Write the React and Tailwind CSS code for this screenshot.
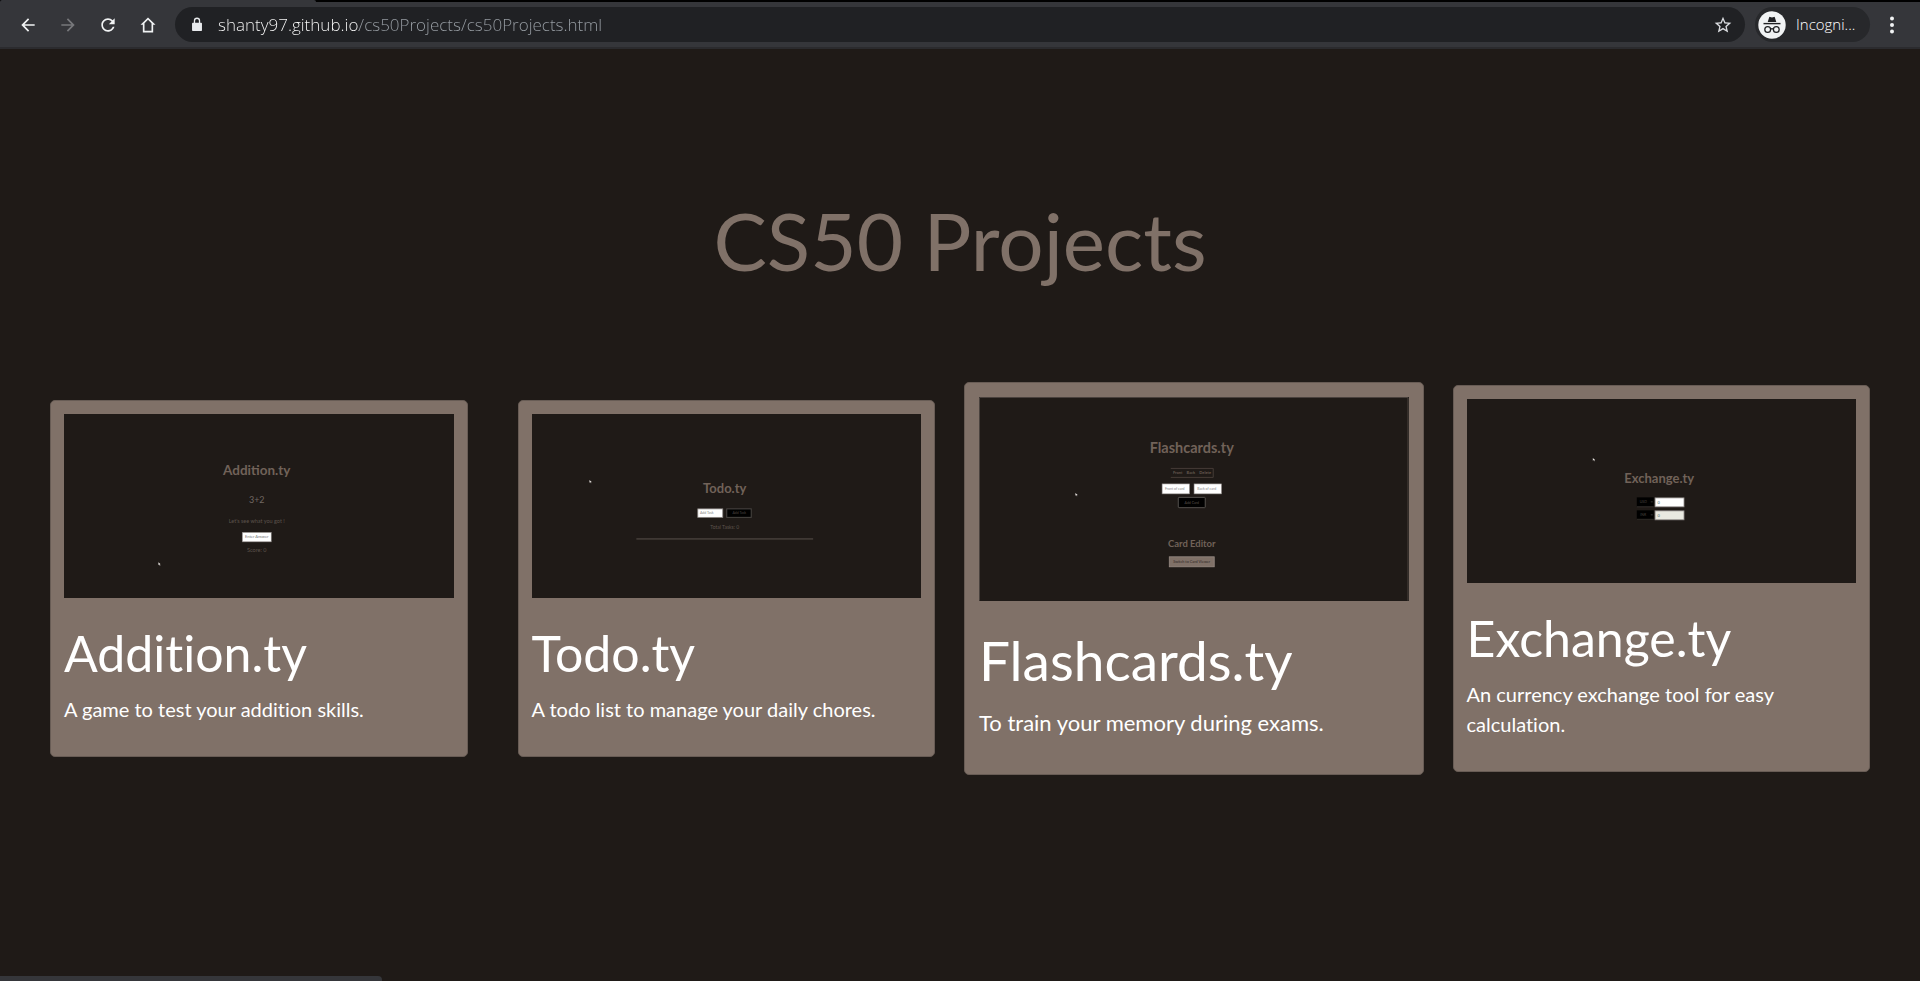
import React from "react";

const small = "#5d534c";

function Pointer({ x, y }) {
  return <path d={`M${x} ${y}v2.8l.8-.6.7 1.2.5-.3-.6-1.1h.9z`} fill="#e6e2df" />;
}

function AdditionShot() {
  return (
    <svg viewBox="0 0 390 185" className="block w-full bg-[#1f1a17]" role="img" aria-label="Addition.ty preview" fontFamily="Lato, sans-serif" textAnchor="middle">
      <text x="193" y="61" fontSize="13.500" fontWeight="700" fill="#716259">Addition.ty</text>
      <text x="193" y="89" fontSize="9" fill="#716762">3+2</text>
      <text x="193" y="109" fontSize="5.500" fill={small}>Let's see what you got !</text>
      <rect x="178.5" y="118.5" width="29" height="9.5" fill="#fff" stroke="#8a8583" strokeWidth=".6" />
      <text x="193" y="124.6" fontSize="4" fill="#777">Enter Answer</text>
      <text x="193" y="138" fontSize="5.500" fill={small}>Score: 0</text>
      <Pointer x={94.5} y={148.5} />
    </svg>
  );
}

function TodoShot() {
  return (
    <svg viewBox="0 0 390 185" className="block w-full bg-[#1f1a17]" role="img" aria-label="Todo.ty preview" fontFamily="Lato, sans-serif" textAnchor="middle">
      <text x="193" y="79" fontSize="13" fontWeight="700" fill="#716259">Todo.ty</text>
      <rect x="166" y="95" width="25" height="8.5" fill="#fff" stroke="#8a8583" strokeWidth=".8" />
      <text x="175" y="100.5" fontSize="3.5" fill="#888">Add Task</text>
      <rect x="195" y="95" width="24.5" height="8.5" fill="#000" stroke="#4b4744" />
      <text x="207.500" y="100.5" fontSize="3.5" fill="#4d4642">Add Task</text>
      <text x="193" y="115.500" fontSize="5" fill={small}>Total Tasks: 0</text>
      <rect x="104.500" y="124.5" width="177" height="1.2" fill="#504843" />
      <Pointer x={57.5} y={66} />
    </svg>
  );
}

function FlashcardsShot() {
  return (
    <svg viewBox="0 0 430 204" className="block w-full bg-[#1f1a17]" role="img" aria-label="Flashcards.ty preview" fontFamily="Lato, sans-serif" textAnchor="middle">
      <path d="M.5 204V.5h429V204" fill="none" stroke="#4a423e" />
      <text x="213" y="56" fontSize="14.500" fontWeight="700" fill="#716259">Flashcards.ty</text>
      <path d="M192 71.5h42.5v9H192" fill="none" stroke="#4a403a" strokeWidth=".9" />
      <g fontSize="4" fontWeight="700" fill="#665950">
        <text x="199" y="77.5">Front</text>
        <text x="212" y="77.5">Back</text>
        <text x="226.500" y="77.5">Delete</text>
      </g>
      <rect x="183.300" y="87" width="27.500" height="10" fill="#fff" stroke="#8a8583" strokeWidth=".6" />
      <rect x="215.300" y="87" width="27.500" height="10" fill="#fff" stroke="#8a8583" strokeWidth=".6" />
      <text x="196" y="93.500" fontSize="3.500" fill="#888">Front of card</text>
      <text x="228" y="93.500" fontSize="3.500" fill="#888">Back of card</text>
      <rect x="199.500" y="100.500" width="27" height="10.300" rx=".6" fill="#000" stroke="#54504d" />
      <text x="213" y="107" fontSize="3.500" fill="#5a514c">Add Card</text>
      <text x="213" y="150.500" fontSize="9.500" fontWeight="700" fill="#716259">Card Editor</text>
      <rect x="190.500" y="160" width="45" height="10" fill="#807168" stroke="#978b84" strokeWidth=".8" />
      <text x="213" y="166.500" fontSize="3.800" fill="#2f2825">Switch to Card Viewer</text>
      <Pointer x={96.5} y={96} />
    </svg>
  );
}

function ExchangeShot() {
  return (
    <svg viewBox="0 0 390 185" className="block w-full bg-[#1f1a17]" role="img" aria-label="Exchange.ty preview" fontFamily="Lato, sans-serif" textAnchor="middle">
      <text x="192.500" y="84" fontSize="13" fontWeight="700" fill="#716259">Exchange.ty</text>
      <rect x="170" y="98.500" width="17" height="9.500" fill="#000" />
      <rect x="170" y="107.500" width="17" height=".9" fill="#37322f" />
      <text x="176.500" y="104.500" fontSize="3.500" fill="#49423e">USD</text>
      <path d="M184 103h2" stroke="#555" strokeWidth=".6" />
      <rect x="188.300" y="99" width="29" height="9" fill="#fff" stroke="#8a8583" strokeWidth=".8" />
      <text x="191.800" y="105" fontSize="4" fill="#3f6a70">0</text>
      <rect x="170" y="111.500" width="17" height="9.500" fill="#000" />
      <rect x="170" y="120" width="17" height=".9" fill="#37322f" />
      <text x="176.500" y="117.500" fontSize="3.500" fill="#49423e">INR</text>
      <path d="M184 116h2" stroke="#555" strokeWidth=".6" />
      <rect x="188.300" y="112" width="29" height="9" fill="#e9e9e1" stroke="#8a8583" strokeWidth=".8" />
      <text x="191.800" y="118" fontSize="4" fill="#4e6b6f">0</text>
      <Pointer x={126} y={59} />
    </svg>
  );
}

const projects = [
  { name: "Addition.ty", text: "A game to test your addition skills.", Shot: AdditionShot },
  { name: "Todo.ty", text: "A todo list to manage your daily chores.", Shot: TodoShot },
  { name: "Flashcards.ty", text: "To train your memory during exams.", Shot: FlashcardsShot, raised: true },
  { name: "Exchange.ty", text: "An currency exchange tool for easy calculation.", Shot: ExchangeShot },
];

function Card({ name, text, Shot, raised }) {
  return (
    <a
      href={`#${name}`}
      className={
        "block rounded-[5px] border border-[#685c55] bg-[#807168] text-white " +
        (raised ? "-mx-[21px] px-3.5 pt-3.5 pb-[35px]" : "px-[13px] pt-[13px] pb-8")
      }
    >
      <Shot />
      <div className="[font-variant-ligatures:none]">
        <h2 className={raised ? "mt-[26px] text-[55px] leading-[66px]" : "mt-[25px] text-[50px] leading-[60px]"}>{name}</h2>
        <p className={raised ? "mt-[13px] text-[22px] leading-[33px]" : "mt-[11px] text-[20px] leading-[30px]"}>{text}</p>
      </div>
    </a>
  );
}

function Glyph({ d, className }) {
  return (
    <svg viewBox="0 0 24 24" className={"size-5 " + className} fill="currentColor" aria-hidden="true">
      <path d={d} />
    </svg>
  );
}

function BrowserBar() {
  const nav = "flex size-10 items-center justify-center";
  return (
    <header className="bg-[#35363a] font-['Open_Sans',sans-serif]">
      <div className="flex h-0.5 bg-black">
        <div className="w-[316px] rounded-t-sm bg-[#35363a]" />
      </div>
      <div className="flex h-[47px] items-center border-b-2 border-[#2b2b2e] pl-2">
        <button type="button" aria-label="Back" className={nav}>
          <Glyph className="text-[#f1f3f4]" d="M20 11H7.830l5.590-5.590L12 4l-8 8 8 8 1.410-1.410L7.830 13H20v-2z" />
        </button>
        <button type="button" aria-label="Forward" className={nav}>
          <Glyph className="text-[#77787b]" d="M12 4l-1.410 1.410L16.170 11H4v2h12.170l-5.580 5.590L12 20l8-8z" />
        </button>
        <button type="button" aria-label="Reload" className={nav}>
          <Glyph className="text-[#f1f3f4]" d="M17.650 6.350C16.200 4.900 14.210 4 12 4c-4.420 0-7.990 3.580-7.990 8s3.570 8 7.990 8c3.730 0 6.840-2.550 7.730-6h-2.080c-.82 2.330-3.040 4-5.650 4-3.310 0-6-2.690-6-6s2.690-6 6-6c1.660 0 3.140.69 4.220 1.780L13 11h7V4l-2.350 2.350z" />
        </button>
        <button type="button" aria-label="Home" className={nav}>
          <Glyph className="text-[#f1f3f4]" d="M12 3L3 11.800h2.800V21h12.400v-9.200H21L12 3zm0 2.800l4.200 4.100V19H7.800V9.900L12 5.800z" />
        </button>
        <div className="ml-[7px] flex h-[35px] flex-1 items-center rounded-full bg-[#202124] pr-3 pl-4">
          <svg viewBox="0 0 12 16" className="h-[15px] w-3 text-[#e8eaed]" aria-hidden="true">
            <path d="M1.500 6h9q.8 0 .8.8v7.400q0 .8-.8.8h-9q-.8 0-.8-.8V6.800q0-.8.8-.8z" fill="currentColor" />
            <path d="M3.300 6.500V4a2.700 2.700 0 0 1 5.400 0v2.500" fill="none" stroke="currentColor" strokeWidth="1.400" />
          </svg>
          <input
            type="text"
            aria-label="Address"
            defaultValue="shanty97.github.io/cs50Projects/cs50Projects.html"
            className="ml-[15px] min-w-0 flex-1 bg-[linear-gradient(to_right,#ffffff_141px,#9aa0a6_141px)] bg-clip-text text-[17px] font-light text-transparent outline-none"
          />
          <button type="button" aria-label="Bookmark this page">
            <Glyph className="text-[#dadce0]" d="M22 9.240l-7.190-.62L12 2 9.190 8.630 2 9.240l5.460 4.730L5.820 21 12 17.270 18.180 21l-1.630-7.030L22 9.240zM12 15.400l-3.760 2.270 1-4.280-3.320-2.880 4.380-.38L12 6.100l1.710 4.040 4.380.38-3.320 2.880 1 4.280L12 15.400z" />
          </button>
        </div>
        <button type="button" className="ml-2.5 flex h-[35px] w-[115px] items-center gap-2.5 rounded-full bg-[#27282b] pl-[3px] text-[15px] font-light text-white">
          <svg viewBox="0 0 28 28" className="size-7" aria-hidden="true">
            <circle cx="14" cy="14" r="13.700" fill="#f1f3f4" />
            <path d="M9.700 11l1.500-4.700q.2-.6.900-.4l1.900.5 1.900-.5q.7-.2.900.4l1.500 4.700z" fill="#202124" />
            <path d="M5.500 12.600h17" stroke="#202124" strokeWidth="1.400" />
            <g fill="none" stroke="#202124" strokeWidth="1.300">
              <circle cx="9.700" cy="18.500" r="2.900" />
              <circle cx="18.300" cy="18.500" r="2.900" />
              <path d="M12.600 18.200q1.400-1 2.800 0" />
            </g>
          </svg>
          Incogni...
        </button>
        <button type="button" aria-label="Menu" className="mr-1.5 flex w-11 justify-center">
          <svg viewBox="0 0 4 18" className="h-[18px] w-1" fill="#f1f3f4" aria-hidden="true">
            <circle cx="2" cy="2.500" r="2" />
            <circle cx="2" cy="9" r="2" />
            <circle cx="2" cy="15.500" r="2" />
          </svg>
        </button>
      </div>
    </header>
  );
}

export default function App() {
  return (
    <div className="flex min-h-screen flex-col bg-[#1f1a17]">
      <BrowserBar />
      <main className="flex-1 px-[50px] pt-[143px] pb-[100px] font-[Lato,sans-serif]">
        <h1 className="text-center text-[80px] leading-[96px] text-[#807168]">CS50 Projects</h1>
        <section className="mt-[94px] grid grid-cols-4 items-center gap-[50px]">
          {projects.map((p) => (
            <Card key={p.name} {...p} />
          ))}
        </section>
      </main>
      <div className="fixed bottom-0 left-0 h-[5px] w-[382px] rounded-tr bg-[#35363a]" />
    </div>
  );
}
